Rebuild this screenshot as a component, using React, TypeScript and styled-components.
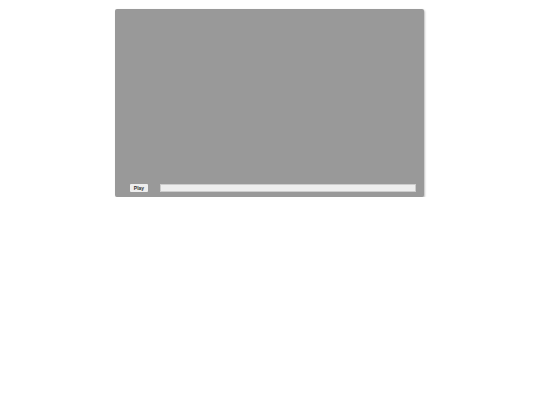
import React from "react";
import styled, { createGlobalStyle } from "styled-components";

const Global = createGlobalStyle`
  html, body { margin: 0; padding: 0; background: #fff; }
  body { font-family: "Liberation Sans", Arial, sans-serif; }
`;

const Page = styled.div`
  display: flex;
  justify-content: center;
  padding: 9px 1px 0 0;
`;

const Player = styled.div`
  width: 309px;
  height: 188px;
  background: #999;
  border-radius: 2px;
  box-shadow: 1px 1px 2px rgba(0, 0, 0, 0.25);
  display: flex;
  flex-direction: column;
  justify-content: flex-end;
  box-sizing: border-box;
  padding: 0 8px 5px 15px;
`;

const Controls = styled.div`
  display: flex;
  align-items: center;
  gap: 12px;
  height: 8px;
`;

const PlayButton = styled.button`
  width: 18px;
  height: 8px;
  padding: 0;
  border: none;
  border-radius: 1px;
  background: #eee;
  color: #333;
  font-family: "Liberation Sans", Arial, sans-serif;
  font-size: 5px;
  font-weight: bold;
  line-height: 8px;
`;

const Track = styled.div`
  flex: 1;
  height: 8px;
  background: #eee;
  border: 1px solid #ccc;
  box-sizing: border-box;
`;

export default function App() {
  return (
    <>
      <Global />
      <Page>
        <Player>
          <Controls>
            <PlayButton>Play</PlayButton>
            <Track />
          </Controls>
        </Player>
      </Page>
    </>
  );
}
